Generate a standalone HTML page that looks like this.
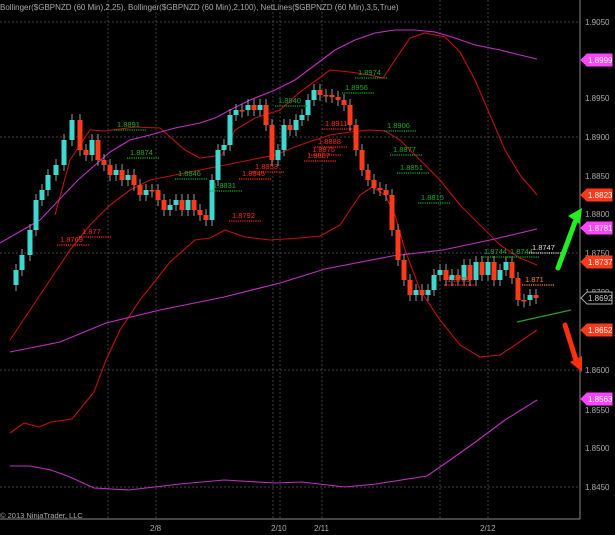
<!DOCTYPE html>
<html><head><meta charset="utf-8"><style>
html,body{margin:0;padding:0;background:#000;width:615px;height:535px;overflow:hidden}
svg{display:block}
text{font-family:"Liberation Sans",sans-serif}
</style></head><body>
<svg id="c" width="615" height="535" viewBox="0 0 615 535" xmlns="http://www.w3.org/2000/svg">
<rect width="615" height="535" fill="#000"/>
<g stroke="#555" stroke-width="0.7" stroke-dasharray="2,2">
<line x1="0" y1="22" x2="580" y2="22"/><line x1="0" y1="137" x2="580" y2="137"/>
<line x1="0" y1="253" x2="580" y2="253"/><line x1="0" y1="370" x2="580" y2="370"/>
<line x1="0" y1="487" x2="580" y2="487"/>
<line x1="108" y1="0" x2="108" y2="519"/><line x1="156" y1="0" x2="156" y2="519"/>
<line x1="273" y1="0" x2="273" y2="519"/><line x1="280" y1="0" x2="280" y2="519"/>
<line x1="322" y1="0" x2="322" y2="519"/><line x1="440" y1="0" x2="440" y2="519"/>
<line x1="488" y1="0" x2="488" y2="519"/>
</g>
<line x1="580" y1="0" x2="580" y2="519" stroke="#888" stroke-width="1"/>
<line x1="0" y1="519" x2="580" y2="519" stroke="#888" stroke-width="1"/>
<g fill="none" stroke-width="1.1">
<polyline stroke="#c01010" points="55,215 70,160 90,130 105,131 135,127 160,128 185,150 200,158 222,155 235,130 255,118 280,110 300,92 330,70 350,72 370,75 383,78 395,60 410,38 425,33 445,37 460,52 475,80 490,115 505,150 520,175 537,195"/>
<polyline stroke="#c01010" points="10,340 30,310 50,280 70,250 90,225 110,205 130,190 150,180 175,175 200,170 225,165 250,160 275,155 300,145 330,135 350,132 370,130 385,131 400,140 420,160 440,180 460,205 480,225 500,245 520,258 537,265"/>
<polyline stroke="#c01010" points="10,433 24,423 39,427 51,422 72,419 94,392 106,360 120,330 140,300 170,262 195,240 210,238 225,230 245,237 270,240 300,238 320,236 340,225 360,195 372,187 385,195 395,215 405,250 420,290 440,320 460,345 480,357 500,355 515,345 537,330"/>
<polyline stroke="#c030c0" points="0,243 40,220 78,180 110,152 130,140 150,135 175,128 200,123 215,118 230,110 250,100 275,90 295,80 315,65 335,50 355,40 375,33 395,30 415,30 435,32 455,38 475,45 500,50 520,55 537,59"/>
<polyline stroke="#c030c0" points="10,352 60,342 106,323 160,310 224,297 280,283 325,269 392,256 443,250 490,240 537,229"/>
<polyline stroke="#c030c0" points="10,466 30,466 51,470 70,477 94,488 129,490 180,484 224,480 275,483 302,482 345,487 376,484 427,476 450,460 474,443 505,420 537,400"/>
</g>
<g id="cand"></g>
<g font-size="7.5" id="nl"></g>
<line x1="517" y1="322" x2="571" y2="310" stroke="#2a9a2a" stroke-width="1.2"/>
<line x1="558" y1="268" x2="575" y2="222" stroke="#22ee22" stroke-width="5" stroke-linecap="round"/>
<polygon points="568,216 582,208 580,224" fill="#22ee22"/>
<line x1="565" y1="325" x2="576" y2="360" stroke="#ff3010" stroke-width="5" stroke-linecap="round"/>
<polygon points="570,362 582,372 582,356" fill="#ff3010"/>
<g font-size="8" fill="#aaa">
<text x="0" y="10">Bollinger($GBPNZD (60 Min),2,25), Bollinger($GBPNZD (60 Min),2,100), NetLines($GBPNZD (60 Min),3,5,True)</text>
<text x="0" y="518" font-size="7.5">© 2013 NinjaTrader, LLC</text>
<text x="150" y="531">2/8</text><text x="271" y="531">2/10</text><text x="314" y="531">2/11</text><text x="480" y="531">2/12</text>
</g>
<g font-size="8" fill="#aaa">
<text x="585" y="25">1.9050</text><text x="585" y="101">1.8950</text><text x="585" y="140">1.8900</text>
<text x="585" y="179">1.8850</text><text x="585" y="217">1.8800</text><text x="585" y="256">1.8750</text>
<text x="585" y="295">1.8700</text><text x="585" y="373">1.8600</text><text x="585" y="413">1.8550</text>
<text x="585" y="451">1.8500</text><text x="585" y="490">1.8450</text>
</g>
<g font-size="8" fill="#fff" id="tags"></g>
</svg>
<script>
var ns="http://www.w3.org/2000/svg";
function el(p,n,a,t){var e=document.createElementNS(ns,n);for(var k in a)e.setAttribute(k,a[k]);if(t)e.textContent=t;p.appendChild(e);return e;}
var pts=[[10,285],[16,270],[22,255],[30,230],[36,200],[42,190],[48,175],[56,165],[64,140],[72,120],[80,150],[86,155],[92,140],[98,160],[104,165],[110,175],[116,170],[122,180],[128,175],[134,185],[140,195],[146,190],[152,190],[158,200],[164,210],[170,205],[176,200],[182,210],[188,200],[194,210],[200,215],[206,220],[212,180],[218,150],[224,145],[230,115],[236,110],[242,110],[248,105],[254,110],[260,105],[266,125],[272,160],[278,150],[284,125],[290,130],[296,120],[302,115],[308,100],[314,90],[320,95],[326,95],[332,97],[338,100],[344,105],[350,125],[356,150],[362,170],[368,180],[374,188],[380,190],[386,195],[392,230],[398,260],[404,280],[410,295],[416,290],[422,295],[428,290],[434,275],[440,270],[446,280],[452,275],[458,280],[464,265],[470,280],[476,262],[482,275],[488,262],[494,280],[500,270],[506,262],[512,278],[518,300],[524,300],[530,295],[536,298]];
var g=document.getElementById('cand');
for(var i=1;i<pts.length;i++){var x=pts[i][0],o=pts[i-1][1],c=pts[i][1];var up=c<o;var t=Math.min(o,c),b=Math.max(o,c);if(b-t<1.5)b=t+1.5;
el(g,'line',{x1:x,y1:t-6,x2:x,y2:b+6,stroke:'#999','stroke-width':1});
el(g,'rect',{x:x-2.5,y:t,width:5,height:b-t,fill:up?'#3fd8d0':'#ff3a1a'});}
var nl=[["#1fa81f",358,75,"1.8974"],["#1fa81f",345,90,"1.8956"],["#1fa81f",387,128,"1.8906"],["#1fa81f",393,152,"1.8877"],["#1fa81f",130,155,"1.8874"],["#1fa81f",117,127,"1.8891"],["#1fa81f",178,176,"1.8846"],["#1fa81f",213,188,"1.8831"],["#1fa81f",421,200,"1.8815"],["#1fa81f",400,170,"1.8851"],["#1fa81f",484,254,"1.8744"],["#1fa81f",510,254,"1.8744"],["#dddddd",532,250,"1.8747"],["#1fa81f",278,103,"1.8940"],
["#ff2a10",325,126,"1.8911"],["#ff2a10",318,144,"1.8888"],["#ff2a10",312,152,"1.8875"],["#ff2a10",307,158,"1.8867"],["#ff2a10",255,169,"1.8853"],["#ff2a10",242,176,"1.8845"],["#ff2a10",232,218,"1.8792"],["#ff2a10",82,234,"1.877"],["#ff2a10",60,242,"1.8769"],["#ff2a10",447,282,"1.8709"],["#ff8a10",525,282,"1.871"]];
var n=document.getElementById('nl');
nl.forEach(function(a){el(n,'text',{x:a[1],y:a[2],fill:a[0]},a[3]);el(n,'line',{x1:a[1]-3,y1:a[2]+3,x2:a[1]+30,y2:a[2]+3,stroke:a[0],'stroke-width':1.2,'stroke-dasharray':'1.2,1'});});
var tg=[[60,"#ff44ff","1.8999","#fff"],[195,"#ff3a1a","1.8823","#fff"],[228,"#ff44ff","1.8781","#fff"],[262,"#ff3a1a","1.8737","#fff"],[298,"#000","1.8692","#ccc"],[330,"#ff3a1a","1.8652","#fff"],[399,"#ff44ff","1.8563","#fff"]];
var T=document.getElementById('tags');
tg.forEach(function(a){var y=a[0];el(T,'polygon',{points:"581,"+y+" 587,"+(y-6)+" 612,"+(y-6)+" 612,"+(y+6)+" 587,"+(y+6),fill:a[1],stroke:a[1]=="#000"?"#aaa":a[1]});el(T,'text',{x:588,y:y+3,fill:a[3]},a[2]);});
</script>
</body></html>
